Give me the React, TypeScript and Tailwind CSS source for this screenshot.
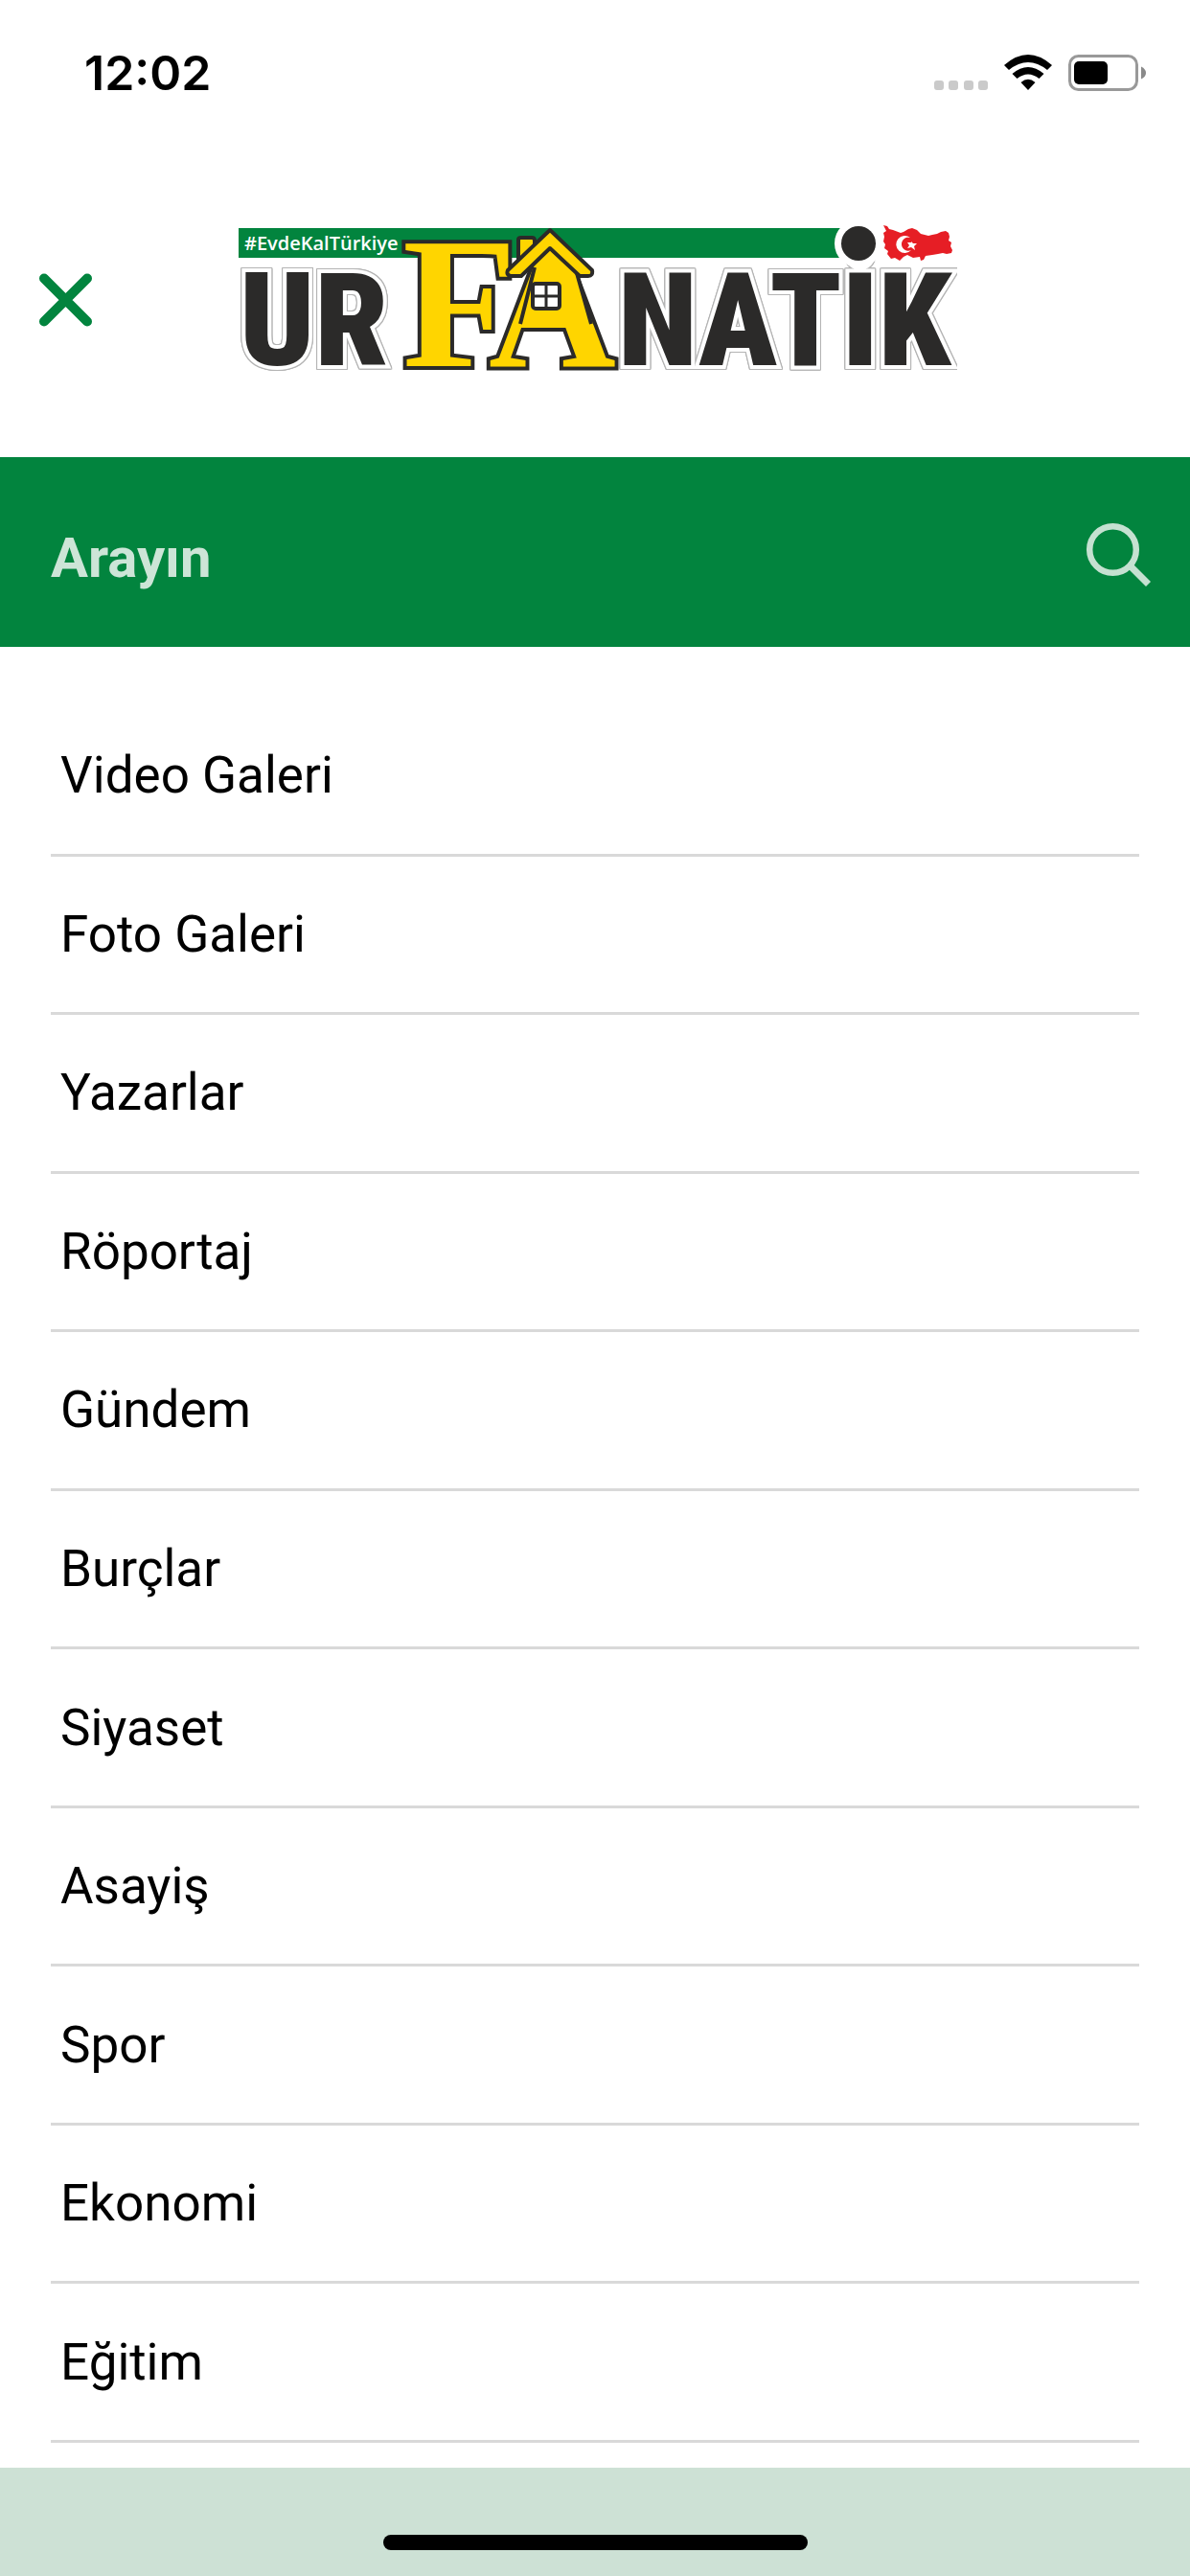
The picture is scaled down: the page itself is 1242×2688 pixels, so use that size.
import { useState, type FormEvent } from 'react'

// Menu entries, top to bottom
const MENU = [
  'Video Galeri',
  'Foto Galeri',
  'Yazarlar',
  'Röportaj',
  'Gündem',
  'Burçlar',
  'Siyaset',
  'Asayiş',
  'Spor',
  'Ekonomi',
  'Eğitim'
]

function StatusBar() {
  return (
    <div className="flex h-[132px] items-center justify-between pt-5 pr-[46px] pl-[88px]">
      <time className="font-['Inter',sans-serif] text-[50px] leading-[56px] font-semibold">12:02</time>
      <svg width="221" height="40" viewBox="974 56 221 40" aria-hidden="true">
        <g fill="#cacaca">
          <rect x="974" y="84" width="10" height="10" rx="3" />
          <rect x="989" y="84" width="10" height="10" rx="3" />
          <rect x="1005" y="84" width="10" height="10" rx="3" />
          <rect x="1020" y="84" width="10" height="10" rx="3" />
        </g>
        <path d="M1047 68q25-22 50 0l-5 5q-20-16-40 0z" />
        <path d="M1055.500 77q16.500-14 33 0l-5 5q-11.500-9-23 0z" />
        <path d="M1064.500 86q7.500-6.500 15 0l-7.500 8z" />
        <rect x="1115.500" y="58.500" width="70" height="35" rx="9" fill="none" stroke="#999" strokeWidth="3" />
        <rect x="1120" y="64" width="35" height="24" rx="5" />
        <path d="M1190 69.500q5 2.500 5 6.500t-5 6.500z" fill="#8a8a8a" />
      </svg>
    </div>
  )
}

function Logo() {
  return (
    <svg width="756" height="280" viewBox="243 172 756 280" role="img" aria-label="#EvdeKalTürkiye urFAnatik">
      <path d="M249 237H880v31H249z" fill="#02843e" />
      <text x="255" y="260" fill="#fff" className="font-['Open_Sans',sans-serif] text-[20px] font-semibold">
        #EvdeKalTürkiye
      </text>

      {/* Dark letters with a white halo and a thin grey edge */}
      <g
        fill="#2b2a29"
        stroke="#fff"
        strokeWidth="8"
        paintOrder="stroke"
        className="[filter:drop-shadow(1px_0_0_#b4b4b4)_drop-shadow(-1px_0_0_#b4b4b4)_drop-shadow(0_1px_0_#b4b4b4)_drop-shadow(0_-1px_0_#b4b4b4)] font-['Roboto_Condensed',sans-serif] text-[136px] font-black"
      >
        <text x="250" y="380">UR</text>
        <text x="645" y="380">NATİK</text>
      </g>
      <circle cx="896" cy="253" r="18" fill="#2b2a29" stroke="#fff" strokeWidth="14" paintOrder="stroke" />

      <g
        fill="#ffd500"
        stroke="#2b2a29"
        strokeWidth="8"
        paintOrder="stroke"
        className="font-['Liberation_Serif',serif] font-bold"
      >
        <text x="510" y="381" className="text-[184px]">A</text>
        <text x="420" y="381" className="text-[196px]">F</text>
      </g>

      {/* House body, roof, chimney and window */}
      <path d="M543 337L558 278 574 256 602 284 617 337z" fill="#ffd500" />
      <path d="M543 337L558 278M602 284L617 337" stroke="#2b2a29" strokeWidth="4" />
      <g fill="#ffd500" stroke="#2b2a29" strokeWidth="4" strokeLinejoin="round">
        <path d="M541 277V249q0-2 3-2h11q3 0 3 3v12z" />
        <path d="M574 239L618 281q1 6-4 6h-9L574 258L544 287h-11q-5-1-3-6z" />
      </g>
      <rect x="556" y="295" width="28" height="26" rx="3" fill="#fff" stroke="#2b2a29" strokeWidth="4" />
      <path d="M570 295v26M556 308h28" stroke="#2b2a29" strokeWidth="3" />

      {/* Map of Türkiye */}
      <path
        d="M922 234l4 1 2 3 4 1 8 3 3-1 5-3 4-1 5 2 4 4 4 1 4 1 4-1 5-1 4-2 5-1 3 2 1 4-1 4 3 2-1 4 2 4-1 3-5 1-4-1-5 1-6 1-7 1-2 4-3 1-1-4-7 1-6-3-4 2-4 4-5-3-4 1-4-5 1-3-4-3 1-4-2-3 1-5-1-4 3-2z"
        fill="#e61e25"
      />
      <path d="M950 247a9 9 0 1 0 1 13a7 7 0 1 1-1-13z" fill="#fff" />
      <path d="M951 251l2 2 4 0-3 3 1 4-4-3-4 1 2-3-2-3h4z" fill="#fff" />
    </svg>
  )
}

export default function App() {
  const [query, setQuery] = useState('')

  const handleSearch = (e: FormEvent): void => {
    e.preventDefault()
  }

  return (
    <div className="flex min-h-screen flex-col bg-white font-['Roboto',sans-serif] text-black">
      <StatusBar />

      <header className="grid h-[345px] grid-cols-[1fr_auto_1fr] items-center pt-4">
        <button type="button" aria-label="Kapat" className="ml-9 w-16">
          <svg width="64" height="64" viewBox="36 280 64 64" stroke="#02843e" strokeWidth="10" strokeLinecap="round">
            <path d="M46 289.500L91 334.500M91 289.500L46 334.500" />
          </svg>
        </button>
        <Logo />
      </header>

      <form
        role="search"
        onSubmit={handleSearch}
        className="flex h-[198px] items-center justify-between bg-[#02843e] pr-[38px] pl-[53px]"
      >
        <input
          type="text"
          aria-label="Arayın"
          placeholder="Arayın"
          value={query}
          onChange={(e) => setQuery(e.target.value)}
          className="mt-3 min-w-0 flex-1 text-[58px] leading-[72px] font-bold text-white outline-none placeholder:text-[#cde5d7]"
        />
        <button type="submit" aria-label="Ara">
          <svg width="72" height="72" viewBox="1130 540 72 72" fill="none" stroke="#c5e1d1">
            <circle cx="1159.500" cy="573.500" r="24.300" strokeWidth="6.500" />
            <path d="M1177 590L1196.500 609.500" strokeWidth="7" />
          </svg>
        </button>
      </form>

      <ul className="grid flex-1 auto-rows-fr px-[53px] pt-[53px] pb-[26px]">
        {MENU.map((item) => (
          <li key={item} className="border-b-[3px] border-[#d9d9d9]">
            <a href="#" className="flex h-full items-center pl-[10px] text-[53px] leading-[64px]">
              {item}
            </a>
          </li>
        ))}
      </ul>

      {/* Home indicator strip */}
      <footer className="flex h-[113px] items-end justify-center bg-[#cde1d5] pb-[27px]">
        <div className="h-4 w-[443px] rounded-full bg-black" />
      </footer>
    </div>
  )
}
